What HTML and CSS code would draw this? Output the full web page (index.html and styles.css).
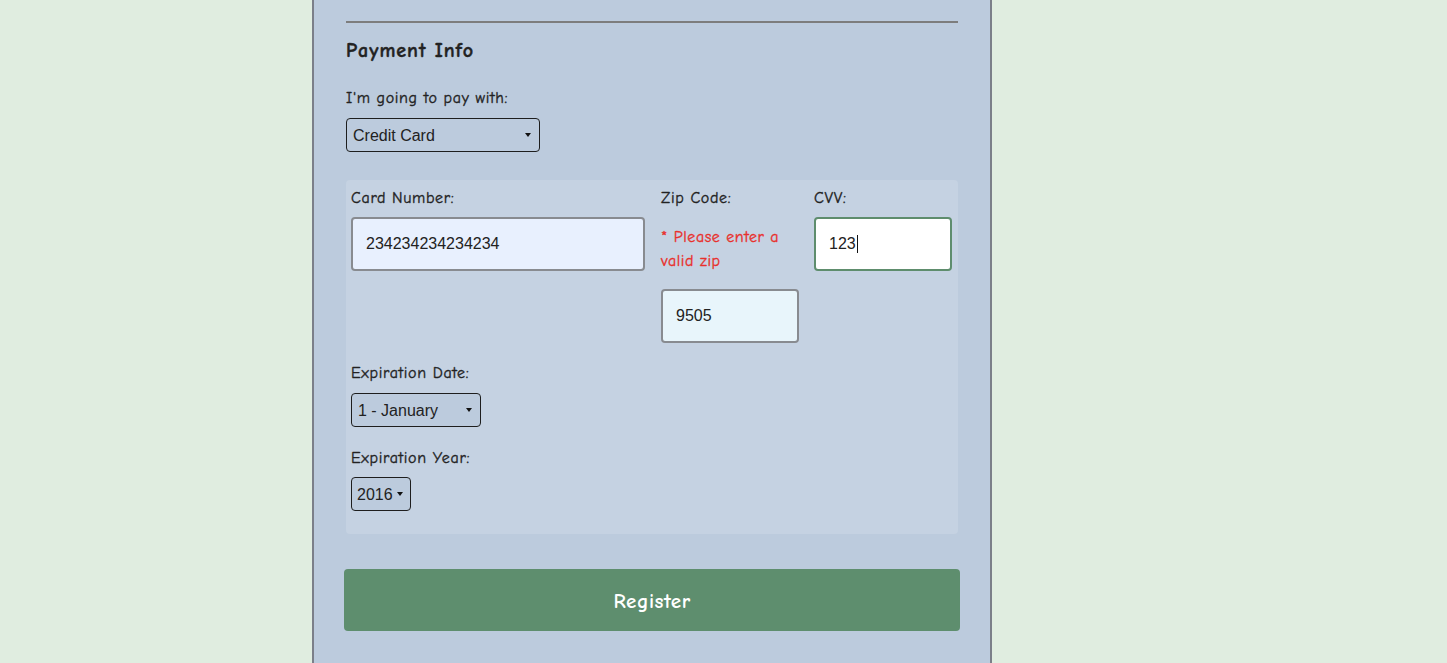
FILE: index.html
```html
<!DOCTYPE html>
<html>
<head>
<meta charset="utf-8">
<link rel="stylesheet" href="styles.css">
</head>
<body>
<main class="form">
  <hr class="rule">
  <h2 class="title">Payment Info</h2>
  <label class="label" for="pay">I'm going to pay with:</label>
  <select id="pay" class="select select-pay"><option>Credit Card</option></select>

  <section class="panel">
    <div class="card-row">
      <div class="field">
        <label class="label">Card Number:</label>
        <input class="input input-card" value="234234234234234">
      </div>
      <div class="field">
        <label class="label">Zip Code:</label>
        <p class="error">* Please enter a valid zip</p>
        <input class="input input-zip" value="9505">
      </div>
      <div class="field">
        <label class="label">CVV:</label>
        <div class="input input-cvv">123<span class="caret"></span></div>
      </div>
    </div>
    <label class="label label-exp">Expiration Date:</label>
    <select class="select select-month"><option>1 - January</option></select>
    <label class="label label-year">Expiration Year:</label>
    <select class="select select-year"><option>2016</option></select>
  </section>

  <button class="register">Register</button>
</main>
</body>
</html>
```

FILE: styles.css
```css
html, body {
  margin: 0;
  padding: 0;
  background: #e0ede0;
  height: 100%;
  overflow: hidden;
}
.form {
  box-sizing: border-box;
  margin-left: 312px;
  width: 680px;
  min-height: 700px;
  background: #bccbdd;
  border-left: 2px solid #7b7f89;
  border-right: 2px solid #7b7f89;
  padding: 21px 32px 40px;
  font-family: "Comic Sans MS", "Comic Neue", "Open Sans", sans-serif;
  color: #222;
  display: flex;
  flex-direction: column;
  align-items: flex-start;
}
.rule {
  align-self: stretch;
  margin: 0;
  border: 0;
  height: 2px;
  background: #7d7d7d;
}
.title {
  margin: 14px 0 0;
  font-size: 20px;
  line-height: 28px;
  font-weight: bold;
  letter-spacing: 1px;
  -webkit-text-stroke: 0.4px #222;
}
.label {
  display: block;
  font-size: 16px;
  line-height: 20px;
  letter-spacing: 0.65px;
  -webkit-text-stroke: 0.35px #222;
}
.form > .label {
  margin-top: 23px;
}
.select {
  -webkit-appearance: none;
  appearance: none;
  box-sizing: border-box;
  height: 34px;
  border: 1px solid #1e1e1e;
  border-radius: 4px;
  background-color: #bccbdd;
  background-image: url("data:image/svg+xml;utf8,<svg xmlns='http://www.w3.org/2000/svg' width='6' height='4'><path d='M0 0h6L3 4z' fill='%23111'/></svg>");
  background-repeat: no-repeat;
  font-family: Arial, "Liberation Sans", sans-serif;
  font-size: 16px;
  color: #222;
  padding: 0 0 0 6px;
  margin-top: 10px;
}
.select-pay {
  width: 194px;
  background-position: right 8px center;
}
.panel {
  align-self: stretch;
  margin-top: 28px;
  background: #c5d2e2;
  border-radius: 4px;
  padding: 8px 5px 23px;
  display: flex;
  flex-direction: column;
  align-items: flex-start;
}
.card-row {
  display: grid;
  grid-template-columns: 294px 138px 138px;
  column-gap: 16px;
  align-items: start;
}
.card-row .field:nth-child(3) { margin-left: -1px; }
.field { display: flex; flex-direction: column; align-items: flex-start; }
.input {
  box-sizing: border-box;
  height: 54px;
  border: 2px solid #888b90;
  border-radius: 4px;
  font-family: Arial, "Liberation Sans", sans-serif;
  font-size: 16px;
  color: #222;
  padding: 0 0 0 13px;
  margin-top: 9px;
  outline: none;
}
.input-card { width: 294px; background: #e8f0fe; }
.input-zip { width: 138px; background: #e8f5fb; margin-top: 16px; }
.input-cvv {
  width: 138px;
  background: #fff;
  border-color: #5e8d6d;
  display: flex;
  align-items: center;
}
.caret {
  display: inline-block;
  width: 1px;
  height: 18px;
  background: #111;
  margin-left: 1px;
}
.error {
  margin: 17px 0 0;
  color: #e8302c;
  font-size: 16px;
  line-height: 24px;
  letter-spacing: 0.55px;
  -webkit-text-stroke: 0.35px #e8302c;
  width: 130px;
}
.label-exp { margin-top: 20px; }
.label-year { margin-top: 21px; }
.select-month { width: 130px; background-position: right 8px center; }
.select-year { width: 60px; padding-left: 5px; margin-top: 9px; background-position: right 7px center; }
.register {
  align-self: stretch;
  margin: 35px -2px 0;
  height: 62px;
  border: 0;
  border-radius: 4px;
  background: #5e8e6e;
  color: #fff;
  font-family: "Comic Sans MS", "Comic Neue", "Open Sans", sans-serif;
  font-size: 21px;
  font-weight: bold;
  letter-spacing: 0.5px;
  padding-top: 2px;
}
```
